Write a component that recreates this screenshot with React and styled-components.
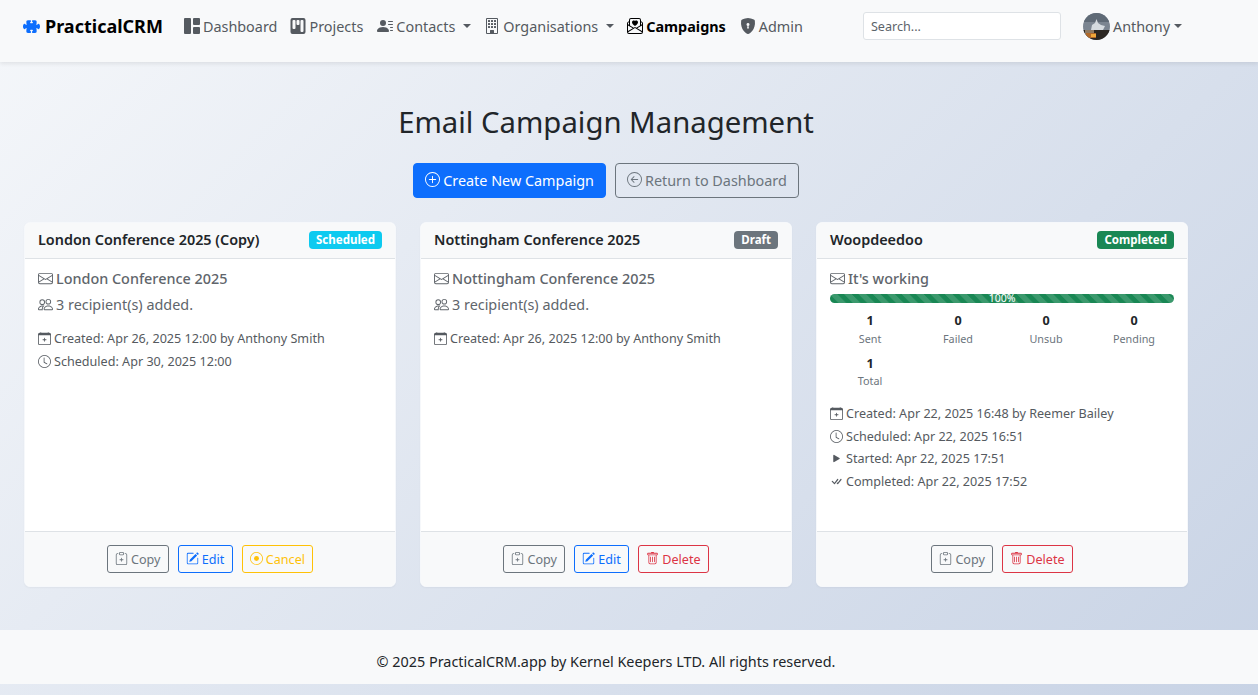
import React from 'react';
import styled, { createGlobalStyle } from 'styled-components';
import {
  BsArrowLeftCircle, BsBuilding, BsCalendarPlus, BsCheckAll, BsClipboardPlus, BsClock,
  BsEnvelope, BsEnvelopePaperHeart, BsGrid1X2Fill, BsKanbanFill, BsPencilSquare, BsPeople,
  BsPersonLinesFill, BsPlayFill, BsPlusCircle, BsPuzzleFill, BsRecordCircle,
  BsShieldLockFill, BsTrash,
} from 'react-icons/bs';

const GlobalStyle = createGlobalStyle`
  html, body { margin: 0; min-height: 695px; }
  body {
    font-family: "Noto Sans", sans-serif;
    font-size: 14.4px;
    color: #212529;
    background: linear-gradient(135deg, #f5f7fa 0%, #c8d3e5 100%);
    height: 695px;
    overflow: hidden;
  }
  * { box-sizing: border-box; }
`;

const Navbar = styled.nav`
  height: 62px;
  background: #f8f9fa;
  box-shadow: 0 2px 4px rgba(0, 0, 0, 0.08);
  display: flex;
  align-items: center;
  padding: 0 0 10px 23px;
`;

const Brand = styled.a`
  display: flex;
  align-items: center;
  gap: 5px;
  font-size: 18px;
  font-weight: 700;
  color: #000;
  margin-right: 21px;
  svg { color: #0d6efd; font-size: 17px; }
`;

const NavLink = styled.a`
  display: flex;
  align-items: center;
  gap: 3px;
  font-size: 14.4px;
  color: ${(p) => (p.$active ? '#000' : '#555a60')};
  font-weight: ${(p) => (p.$active ? 700 : 400)};
  margin-right: ${(p) => p.$gap ?? 13}px;
  white-space: nowrap;
  svg { font-size: 16px; }
`;

const Caret = styled.span`
  display: inline-block;
  margin-left: 5px;
  border-top: 4.8px solid currentColor;
  border-left: 4.8px solid transparent;
  border-right: 4.8px solid transparent;
`;

const Search = styled.input`
  width: 198px;
  height: 28px;
  margin-left: 60px;
  padding: 0 7px;
  font: 12.6px "Noto Sans", sans-serif;
  color: #212529;
  background: #fff;
  border: 1px solid #dee2e6;
  border-radius: 3px;
  &::placeholder { color: #5c636a; opacity: 1; }
`;

const UserMenu = styled.div`
  display: flex;
  align-items: center;
  gap: 3px;
  margin-left: 22px;
  font-size: 14.4px;
  color: #555a60;
`;

const AvatarSvg = styled.svg`
  width: 27px;
  height: 27px;
  border-radius: 50%;
`;

const UserCaret = styled(Caret)`
  margin-left: 1px;
  border-top-width: 4px;
  border-left-width: 4px;
  border-right-width: 4px;
`;

const Main = styled.main`
  width: 1212px;
  padding: 0 24px;
  height: 568px;
`;

const Title = styled.h1`
  margin: 0;
  padding-top: 40px;
  font-size: 29.3px;
  line-height: 41px;
  font-weight: 400;
  text-align: center;
  color: #212529;
`;

const TopActions = styled.div`
  display: flex;
  justify-content: center;
  gap: 9px;
  margin-top: 20px;
`;

const BigButton = styled.a`
  display: flex;
  align-items: center;
  gap: 3px;
  height: 35px;
  padding: 0 11px;
  font-size: 14.4px;
  border-radius: 4px;
  border: 1px solid ${(p) => (p.$primary ? '#0d6efd' : '#6c757d')};
  background: ${(p) => (p.$primary ? '#0d6efd' : 'transparent')};
  color: ${(p) => (p.$primary ? '#fff' : '#6c757d')};
  svg { font-size: 15px; margin-top: -2px; }
`;

const CardGrid = styled.div`
  display: grid;
  grid-template-columns: repeat(3, 372px);
  gap: 24px;
  margin-top: 24px;
`;

const Card = styled.section`
  height: 365px;
  display: flex;
  flex-direction: column;
  background: #fff;
  border: 1px solid #f6f8fb;
  border-radius: 6px;
  overflow: hidden;
  box-shadow: 0 1px 2px rgba(0, 0, 0, 0.04);
`;

const CardHeader = styled.header`
  height: 36px;
  flex: none;
  display: flex;
  align-items: center;
  justify-content: space-between;
  padding: 0 13px 2px;
  background: #f8f9fa;
  border-bottom: 1px solid #dee2e6;
`;

const CardTitle = styled.h2`
  margin: 0;
  font-size: 14.4px;
  font-weight: 600;
  color: #212529;
`;

const statusColors = { info: '#0dcaf0', secondary: '#6c757d', success: '#198754' };

const Badge = styled.span`
  font-size: 11.52px;
  line-height: 18px;
  height: 18px;
  padding: 0 7px;
  font-weight: 700;
  color: #fff;
  border-radius: 4px;
  background: ${(p) => statusColors[p.$tone]};
`;

const CardBody = styled.div`
  flex: 1;
  padding: 9px 13px 0;
  color: #555a60;
`;

const Subject = styled.div`
  display: flex;
  align-items: center;
  gap: 3px;
  font-size: 14.4px;
  font-weight: 500;
  line-height: 21px;
  color: #60656b;
  svg { font-size: 15px; }
`;

const Recipients = styled(Subject)`
  margin-top: 5px;
  font-weight: 400;
`;

const Progress = styled.div`
  height: 9px;
  margin-top: 5px;
  border-radius: 5px;
  background-color: #198754;
  background-image: linear-gradient(
    45deg,
    rgba(255, 255, 255, 0.15) 25%,
    transparent 25%,
    transparent 50%,
    rgba(255, 255, 255, 0.15) 50%,
    rgba(255, 255, 255, 0.15) 75%,
    transparent 75%,
    transparent
  );
  background-size: 14.4px 14.4px;
`;

const ProgressLabel = styled.span`
  display: block;
  font-size: 10.5px;
  line-height: 9px;
  color: #fff;
  text-align: center;
`;

const StatGrid = styled.div`
  display: grid;
  grid-template-columns: repeat(4, 1fr);
  row-gap: 7px;
  margin: 9px -4px 0;
`;

const Stat = styled.div`
  text-align: center;
`;

const StatValue = styled.div`
  font-size: 12.6px;
  line-height: 17.5px;
  font-weight: 700;
  color: #212529;
`;

const StatLabel = styled.div`
  font-size: 10.8px;
  line-height: 18px;
  color: #6c757d;
`;

const Meta = styled.div`
  margin-top: 12px;
`;

const MetaRow = styled.div`
  display: flex;
  align-items: center;
  gap: 3px;
  height: 22.7px;
  font-size: 12.6px;
  color: #555a60;
  white-space: nowrap;
  svg { font-size: 13px; flex: none; }
`;

const CardFooter = styled.footer`
  height: 55px;
  flex: none;
  display: flex;
  align-items: center;
  justify-content: center;
  gap: 9px;
  background: #f8f9fa;
  border-top: 1px solid #dee2e6;
`;

const actionColors = { copy: '#6c757d', edit: '#0d6efd', cancel: '#ffc107', remove: '#dc3545' };

const ActionButton = styled.a`
  display: flex;
  align-items: center;
  gap: 3px;
  height: 28px;
  padding: 0 7.2px;
  font-size: 12.6px;
  border-radius: 3px;
  border: 1px solid ${(p) => actionColors[p.$kind]};
  color: ${(p) => actionColors[p.$kind]};
  svg { font-size: 13px; margin-top: -2px; }
`;

const Footer = styled.footer`
  height: 54px;
  padding-top: 8px;
  background: #f8f9fa;
  display: flex;
  align-items: center;
`;

const FooterText = styled.p`
  width: 1212px;
  margin: 0;
  text-align: center;
  font-size: 14.4px;
  color: #212529;
`;

const Avatar = () => (
  <AvatarSvg viewBox="0 0 27 27">
    <rect width="27" height="27" fill="#7b8591" />
    <rect y="0" width="27" height="9" fill="#5f6a76" />
    <rect y="17" width="27" height="10" fill="#2b2722" />
    <path d="M8 17 L9 12 L12 10 L13.5 6 L15 10 L18 12 L22 13 L20 17 Z" fill="#d5dbe0" />
    <rect x="2" y="17" width="9" height="4" fill="#8f7a62" />
    <rect x="3" y="20" width="10" height="5" fill="#b26a2a" />
    <rect x="8" y="21" width="5" height="3" fill="#efa83a" />
  </AvatarSvg>
);

const Action = ({ kind, icon: Icon, label }) => (
  <ActionButton $kind={kind}>
    <Icon />
    {label}
  </ActionButton>
);

const campaigns = [
  {
    title: 'London Conference 2025 (Copy)',
    status: 'Scheduled',
    tone: 'info',
    subject: 'London Conference 2025',
    meta: [
      [BsCalendarPlus, 'Created: Apr 26, 2025 12:00 by Anthony Smith'],
      [BsClock, 'Scheduled: Apr 30, 2025 12:00'],
    ],
    actions: [
      ['copy', BsClipboardPlus, 'Copy'],
      ['edit', BsPencilSquare, 'Edit'],
      ['cancel', BsRecordCircle, 'Cancel'],
    ],
  },
  {
    title: 'Nottingham Conference 2025',
    status: 'Draft',
    tone: 'secondary',
    subject: 'Nottingham Conference 2025',
    meta: [[BsCalendarPlus, 'Created: Apr 26, 2025 12:00 by Anthony Smith']],
    actions: [
      ['copy', BsClipboardPlus, 'Copy'],
      ['edit', BsPencilSquare, 'Edit'],
      ['remove', BsTrash, 'Delete'],
    ],
  },
  {
    title: 'Woopdeedoo',
    status: 'Completed',
    tone: 'success',
    subject: "It's working",
    progress: true,
    meta: [
      [BsCalendarPlus, 'Created: Apr 22, 2025 16:48 by Reemer Bailey'],
      [BsClock, 'Scheduled: Apr 22, 2025 16:51'],
      [BsPlayFill, 'Started: Apr 22, 2025 17:51'],
      [BsCheckAll, 'Completed: Apr 22, 2025 17:52'],
    ],
    actions: [
      ['copy', BsClipboardPlus, 'Copy'],
      ['remove', BsTrash, 'Delete'],
    ],
  },
];

const stats = [['1', 'Sent'], ['0', 'Failed'], ['0', 'Unsub'], ['0', 'Pending'], ['1', 'Total']];

function CampaignCard({ campaign }) {
  return (
    <Card>
      <CardHeader>
        <CardTitle>{campaign.title}</CardTitle>
        <Badge $tone={campaign.tone}>{campaign.status}</Badge>
      </CardHeader>
      <CardBody>
        <Subject>
          <BsEnvelope />
          {campaign.subject}
        </Subject>
        {campaign.progress ? (
          <>
            <Progress>
              <ProgressLabel>100%</ProgressLabel>
            </Progress>
            <StatGrid>
              {stats.map(([value, label]) => (
                <Stat key={label}>
                  <StatValue>{value}</StatValue>
                  <StatLabel>{label}</StatLabel>
                </Stat>
              ))}
            </StatGrid>
          </>
        ) : (
          <Recipients>
            <BsPeople />
            3 recipient(s) added.
          </Recipients>
        )}
        <Meta>
          {campaign.meta.map(([Icon, text]) => (
            <MetaRow key={text}>
              <Icon />
              {text}
            </MetaRow>
          ))}
        </Meta>
      </CardBody>
      <CardFooter>
        {campaign.actions.map(([kind, icon, label]) => (
          <Action key={label} kind={kind} icon={icon} label={label} />
        ))}
      </CardFooter>
    </Card>
  );
}

export default function App() {
  return (
    <>
      <GlobalStyle />
      <Navbar>
        <Brand>
          <BsPuzzleFill />
          PracticalCRM
        </Brand>
        <NavLink><BsGrid1X2Fill />Dashboard</NavLink>
        <NavLink $gap={14}><BsKanbanFill />Projects</NavLink>
        <NavLink><BsPersonLinesFill />Contacts<Caret /></NavLink>
        <NavLink><BsBuilding />Organisations<Caret /></NavLink>
        <NavLink $active $gap={14}><BsEnvelopePaperHeart />Campaigns</NavLink>
        <NavLink $gap={0}><BsShieldLockFill />Admin</NavLink>
        <Search placeholder="Search..." />
        <UserMenu>
          <Avatar />
          Anthony
          <UserCaret />
        </UserMenu>
      </Navbar>
      <Main>
        <Title>Email Campaign Management</Title>
        <TopActions>
          <BigButton $primary><BsPlusCircle />Create New Campaign</BigButton>
          <BigButton><BsArrowLeftCircle />Return to Dashboard</BigButton>
        </TopActions>
        <CardGrid>
          {campaigns.map((campaign) => (
            <CampaignCard key={campaign.title} campaign={campaign} />
          ))}
        </CardGrid>
      </Main>
      <Footer>
        <FooterText>© 2025 PracticalCRM.app by Kernel Keepers LTD. All rights reserved.</FooterText>
      </Footer>
    </>
  );
}
